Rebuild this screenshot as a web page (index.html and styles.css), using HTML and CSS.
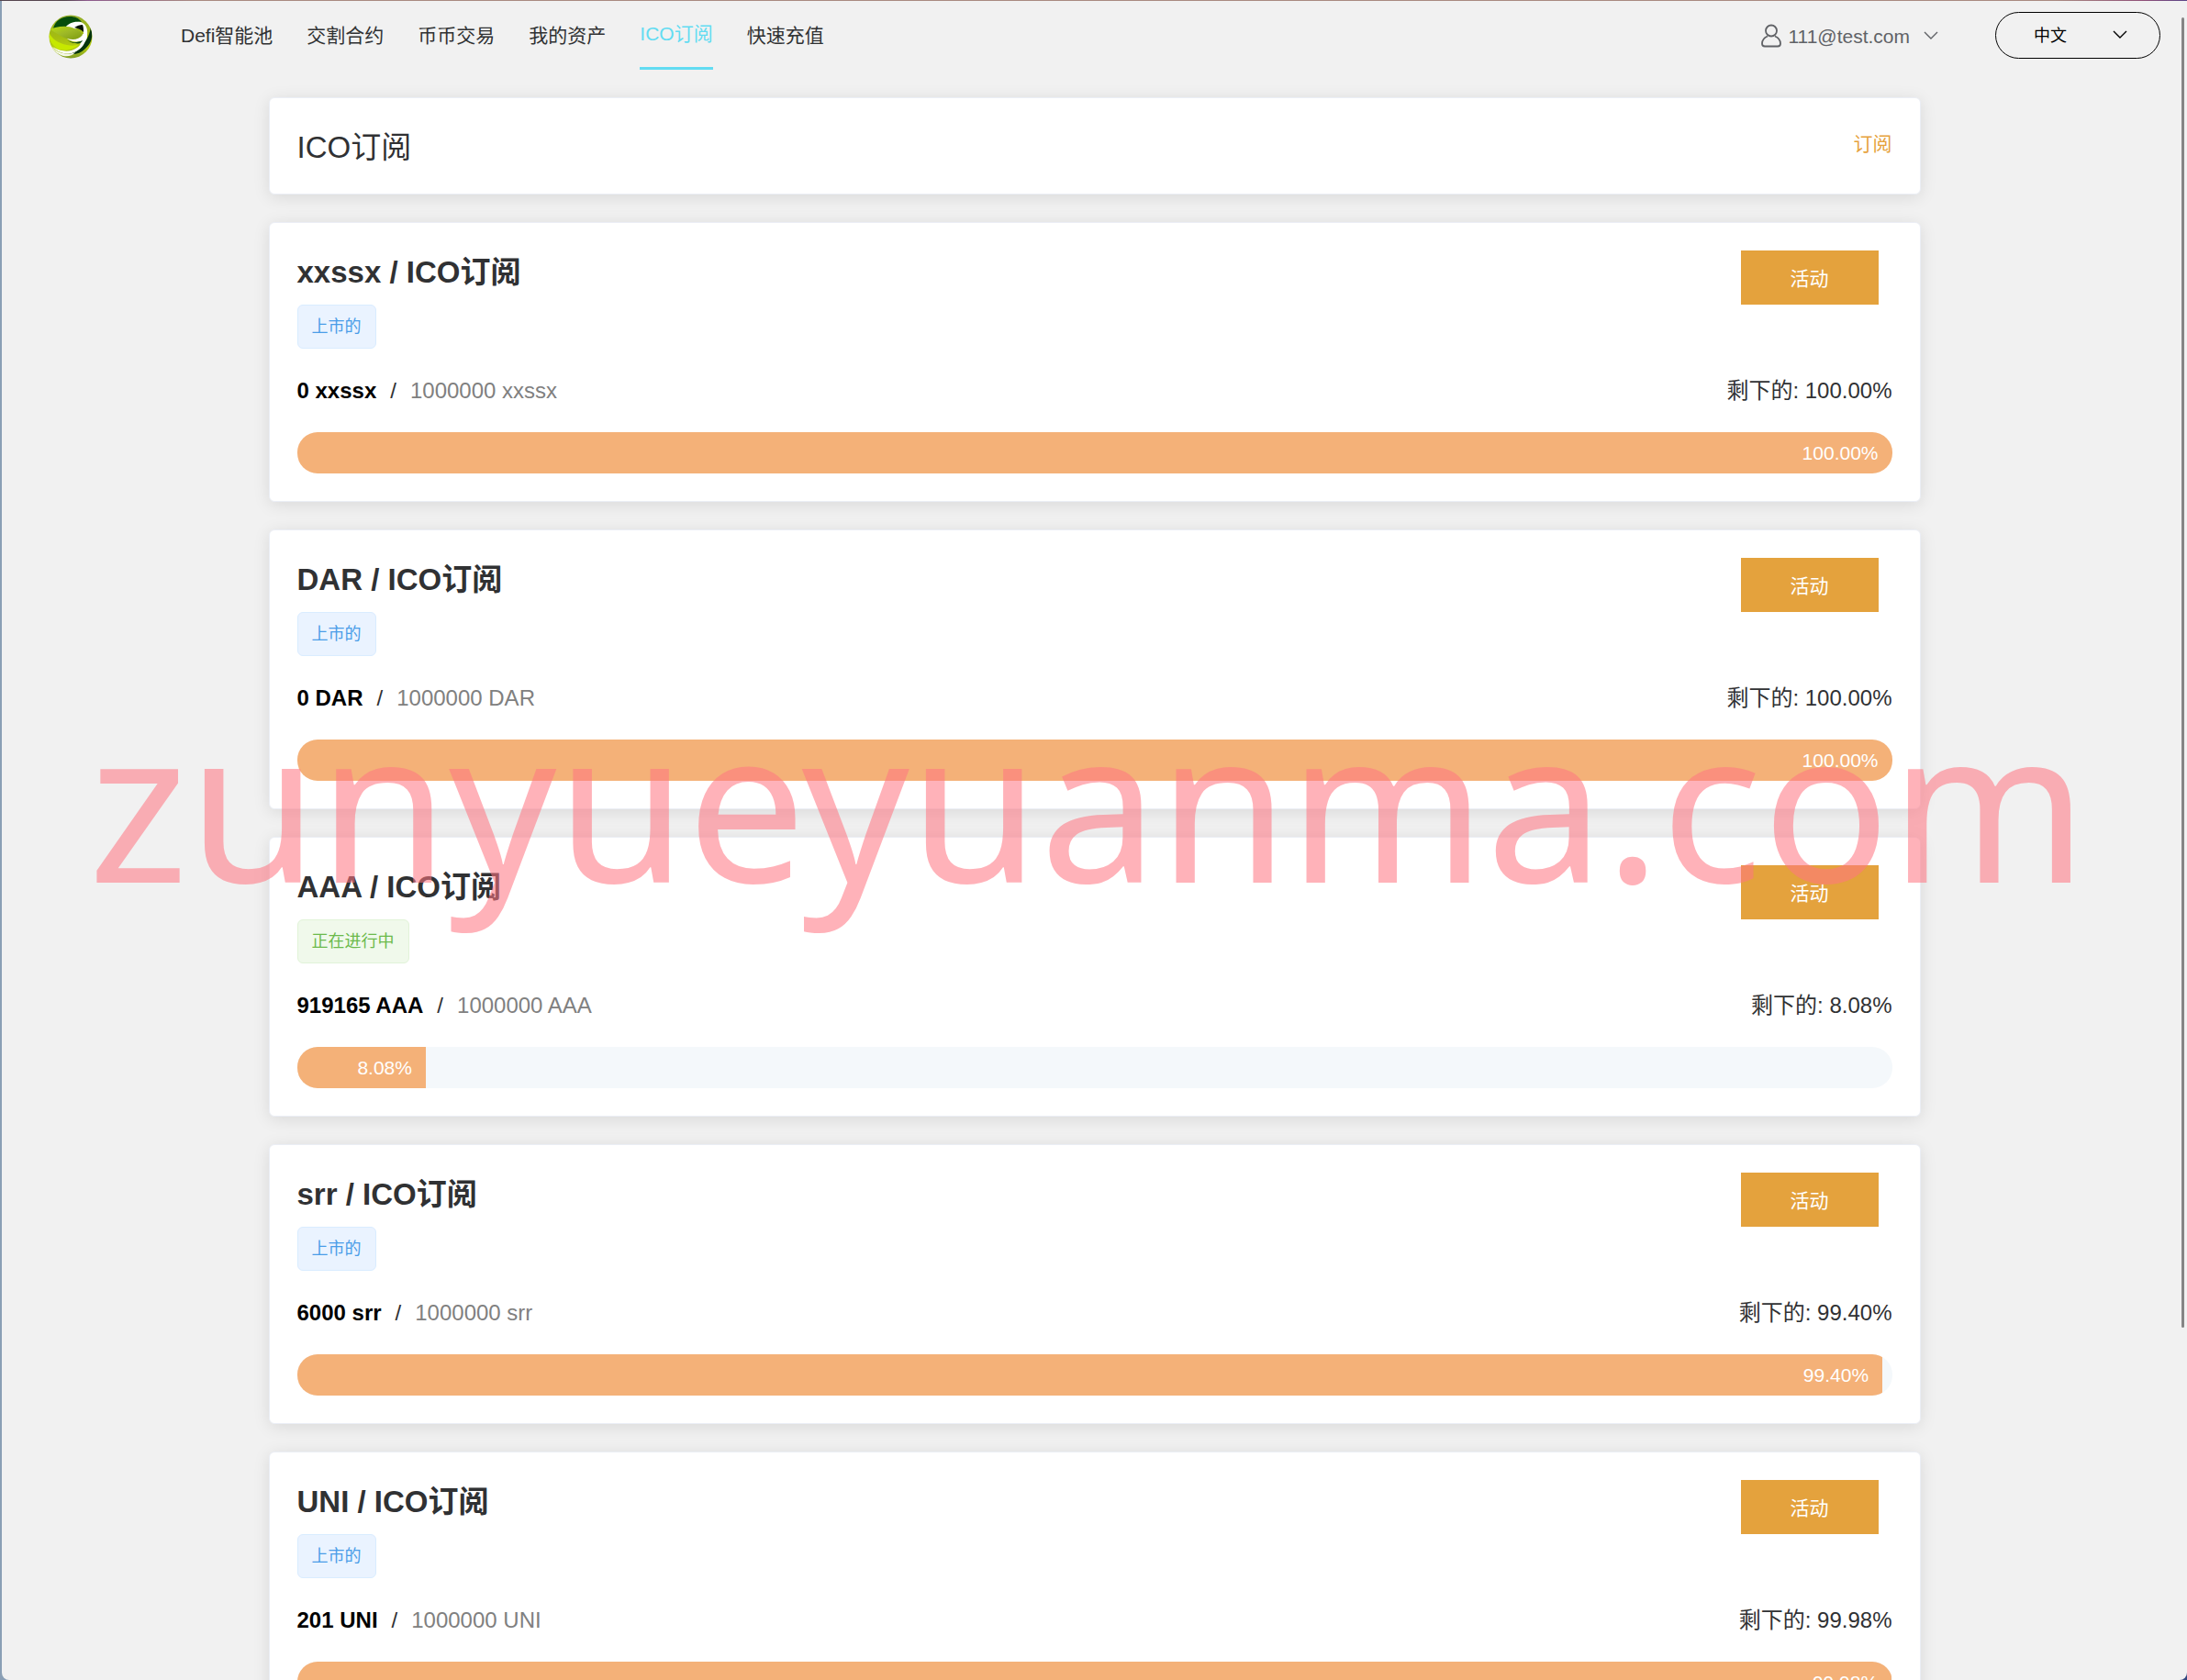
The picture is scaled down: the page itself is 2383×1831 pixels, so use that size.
FILE: index.html
```html
<!DOCTYPE html>
<html lang="zh-CN">
<head>
  <meta charset="UTF-8">
  <meta name="viewport" content="width=device-width, initial-scale=1.0">
  <title>ICO订阅</title>
  <link rel="stylesheet" href="styles.css">
</head>
<body>
  <div class="window">
    <header class="header">
      <a class="logo" href="#" aria-label="首页">
        <svg width="48" height="48" viewBox="0 0 48 48">
          <defs>
            <clipPath id="ball"><circle cx="24" cy="24" r="23.5"/></clipPath>
            <linearGradient id="leaf" x1="0" y1="0" x2="0" y2="1">
              <stop offset="0" stop-color="#93ad2c"/>
              <stop offset="0.5" stop-color="#a5bd10"/>
              <stop offset="0.75" stop-color="#b4cc14"/>
              <stop offset="1" stop-color="#7d9a26"/>
            </linearGradient>
            <linearGradient id="wing" x1="0" y1="0" x2="1" y2="1">
              <stop offset="0" stop-color="#b9dc10"/>
              <stop offset="0.5" stop-color="#9db827"/>
              <stop offset="1" stop-color="#7c9a10"/>
            </linearGradient>
          </defs>
          <g clip-path="url(#ball)">
            <rect width="48" height="48" fill="url(#leaf)"/>
            <path d="M5 15C7 7 14 2 23 2c6 0 10 2 13 6-8-1-14 2-18 7z" fill="#064d0c"/>
            <path d="M35 8c6 2 8 8 7 15 0 8-6 15-13 18-9 3-18 1-25-6 10 6 20 6 27 1 3-2 4-4 4-7-6 1-11 0-15-3l18-5-1-9-9 4-11-1c5-6 10-8 18-7z" fill="#fff"/>
            <path d="M28 14c3-2 6-3 9-3 1 3 1 5 1 8-3-3-6-4-10-5z" fill="#031207"/>
            <path d="M46 13c3 9 1 18-6 24-5 5-11 7-18 6 8-2 14-6 17-12 3-5 6-10 7-18z" fill="#05340d"/>
            <path d="M20 27c5 4 10 4 17 1-1 3-4 4-8 3-4 0-7-2-9-4z" fill="#0a4a14"/>
            <path d="M3 35c8 8 18 9 26 6-3 4-8 5-13 4-6-2-10-5-13-10z" fill="#f5f8e8"/>
            <path d="M1 16c7-3 19-5 27-1 5 2 8 4 9 7-4 5-10 6-17 4-7-2-11-6-19-10z" fill="url(#wing)"/>
            <path d="M0 19c4 8 10 12 20 14 5 1 9 1 13-1-5 6-13 8-22 6C4 34 0 28 0 19z" fill="#c6e800"/>
          </g>
        </svg>
      </a>
      <nav class="nav">
        <a href="#">Defi智能池</a>
        <a href="#">交割合约</a>
        <a href="#">币币交易</a>
        <a href="#">我的资产</a>
        <a href="#" class="active">ICO订阅</a>
        <a href="#">快速充值</a>
      </nav>
      <button class="user" type="button">
        <svg width="22" height="26" viewBox="0 0 22 26" fill="none" stroke="currentColor" stroke-width="1.8">
          <circle cx="11" cy="7.5" r="6"/>
          <path d="M7 13.500C3.500 15 1 17.500 1 21.500c0 2 1 3 3 3h14c2 0 3-1 3-3 0-4-2.500-6.500-6-8"/>
        </svg>
        <span>111@test.com</span>
        <svg class="arrow" width="16" height="10" viewBox="0 0 16 10" fill="none" stroke="currentColor" stroke-width="1.4">
          <path d="M1 1l7 7 7-7"/>
        </svg>
      </button>
      <div class="lang">
        <select aria-label="语言">
          <option>中文</option>
          <option>English</option>
        </select>
        <svg width="16" height="10" viewBox="0 0 16 10" fill="none" stroke="#000" stroke-width="1.4">
          <path d="M1 1l7 7 7-7"/>
        </svg>
      </div>
    </header>

    <main class="main">
      <section class="card card-title">
        <h1>ICO订阅</h1>
        <a href="#">订阅</a>
      </section>

      <section class="card">
        <div class="card-head">
          <h2>xxssx / ICO订阅</h2>
          <button type="button">活动</button>
        </div>
        <span class="tag">上市的</span>
        <div class="stats">
          <div><b>0 xxssx</b><i>/</i><span>1000000 xxssx</span></div>
          <div>剩下的: 100.00%</div>
        </div>
        <div class="progress"><div class="bar" style="width: 100%">100.00%</div></div>
      </section>

      <section class="card">
        <div class="card-head">
          <h2>DAR / ICO订阅</h2>
          <button type="button">活动</button>
        </div>
        <span class="tag">上市的</span>
        <div class="stats">
          <div><b>0 DAR</b><i>/</i><span>1000000 DAR</span></div>
          <div>剩下的: 100.00%</div>
        </div>
        <div class="progress"><div class="bar" style="width: 100%">100.00%</div></div>
      </section>

      <section class="card">
        <div class="card-head">
          <h2>AAA / ICO订阅</h2>
          <button type="button">活动</button>
        </div>
        <span class="tag tag-success">正在进行中</span>
        <div class="stats">
          <div><b>919165 AAA</b><i>/</i><span>1000000 AAA</span></div>
          <div>剩下的: 8.08%</div>
        </div>
        <div class="progress"><div class="bar" style="width: 8.08%">8.08%</div></div>
      </section>

      <section class="card">
        <div class="card-head">
          <h2>srr / ICO订阅</h2>
          <button type="button">活动</button>
        </div>
        <span class="tag">上市的</span>
        <div class="stats">
          <div><b>6000 srr</b><i>/</i><span>1000000 srr</span></div>
          <div>剩下的: 99.40%</div>
        </div>
        <div class="progress"><div class="bar" style="width: 99.4%">99.40%</div></div>
      </section>

      <section class="card">
        <div class="card-head">
          <h2>UNI / ICO订阅</h2>
          <button type="button">活动</button>
        </div>
        <span class="tag">上市的</span>
        <div class="stats">
          <div><b>201 UNI</b><i>/</i><span>1000000 UNI</span></div>
          <div>剩下的: 99.98%</div>
        </div>
        <div class="progress"><div class="bar" style="width: 99.98%">99.98%</div></div>
      </section>
    </main>
  </div>
  <div class="scroll-thumb"></div>
  <div class="watermark">zunyueyuanma.com</div>
</body>
</html>
```

FILE: styles.css
```css
* {
  box-sizing: border-box;
}
body {
  margin: 0;
  height: 100vh;
  padding: 1px 0 0 2px;
  overflow: hidden;
  font-family: "Liberation Sans", "Noto Sans CJK SC", sans-serif;
  font-size: 24px;
  color: #303133;
  background:
    linear-gradient(90deg, #55454f 3%, #8c5a8c 4%, #a98a80 9%, #a98a80 94%, #8f5078 98%, #5a4488) top / 100% 1px no-repeat,
    linear-gradient(90deg, #8a9fb5 50%, #33477f 50%);
}
a {
  color: inherit;
  text-decoration: none;
}
button,
select {
  font-family: inherit;
  cursor: pointer;
}
.window {
  height: 100%;
  overflow-y: auto;
  scrollbar-width: none;
  background: #f1f1f1;
  border-radius: 0 0 8px 8px;
}

/* header */
.header {
  display: flex;
  align-items: center;
  height: 75px;
  padding: 0 29px 0 51px;
}
.logo {
  width: 144px;
  height: 48px;
  margin-top: 3px;
}
.nav {
  display: flex;
  flex: 1;
  gap: 37px;
  align-self: stretch;
  font-size: 21px;
  line-height: 75px;
  white-space: nowrap;
}
.nav .active {
  height: 75px;
  line-height: 72px;
  color: #62dcf2;
  border-bottom: 3px solid #62dcf2;
}
.user {
  display: flex;
  align-items: center;
  margin-right: 62px;
  padding: 0;
  border: none;
  background: none;
  font-size: 21px;
  color: #606266;
}
.user span {
  margin: 2px 15px 0 7px;
}
.lang {
  position: relative;
}
.lang select {
  width: 180px;
  height: 51px;
  padding: 0 41px;
  appearance: none;
  border: 1px solid #000;
  border-radius: 26px;
  background: none;
  font-size: 18px;
  color: #000;
}
.lang svg {
  position: absolute;
  top: 20px;
  right: 36px;
  pointer-events: none;
}

/* cards */
.main {
  max-width: 1800px;
  margin: 30px auto 0;
}
.card {
  margin-bottom: 30px;
  padding: 30px;
  background: #fff;
  border: 1px solid #ebeef5;
  border-radius: 6px;
  box-shadow: 0 3px 18px rgba(0, 0, 0, 0.1);
}
.card-title {
  display: flex;
  justify-content: space-between;
  height: 106px;
}
h1,
h2 {
  margin: 0;
  font-size: 33px;
  line-height: 48px;
}
h1 {
  font-weight: normal;
}
.card-title a {
  font-size: 21px;
  line-height: 40px;
  color: #e6a23c;
}
.card-head {
  display: flex;
  align-items: flex-start;
  justify-content: space-between;
}
.card-head button {
  width: 150px;
  height: 59px;
  margin-right: 15px;
  padding: 0 0 2px;
  border: none;
  background: #e4a23d;
  font-size: 21px;
  color: #fff;
}
.tag {
  display: block;
  width: fit-content;
  height: 48px;
  padding: 0 15px;
  background: #eaf3ff;
  border: 1px solid #d9ecff;
  border-radius: 6px;
  font-size: 18px;
  line-height: 46px;
  color: #4a9de8;
}
.tag-success {
  background: #f0f9eb;
  border-color: #e1f3d8;
  color: #6cba4c;
}
.stats {
  display: flex;
  justify-content: space-between;
  margin: 30px 0;
  line-height: 31px;
}
.stats b {
  color: #000;
}
.stats i {
  margin: 0 15px;
  font-style: normal;
}
.stats span {
  color: #808080;
}
.progress {
  height: 45px;
  overflow: hidden;
  background: #f4f8fb;
  border-radius: 22px;
}
.bar {
  height: 45px;
  padding-right: 15px;
  background: #f4b178;
  font-size: 21px;
  line-height: 45px;
  text-align: right;
  color: #fff;
}

.scroll-thumb {
  position: fixed;
  top: 19px;
  right: 3px;
  width: 3px;
  height: 78vh;
  background: #858585;
  border-radius: 2px;
}
.watermark {
  position: fixed;
  top: 50%;
  left: 0;
  right: 0;
  font-family: "Noto Sans", sans-serif;
  font-size: 230px;
  line-height: 230px;
  margin-top: -158px;
  padding-right: 12px;
  text-align: center;
  white-space: nowrap;
  color: rgba(255, 117, 130, 0.56);
  pointer-events: none;
}
```
